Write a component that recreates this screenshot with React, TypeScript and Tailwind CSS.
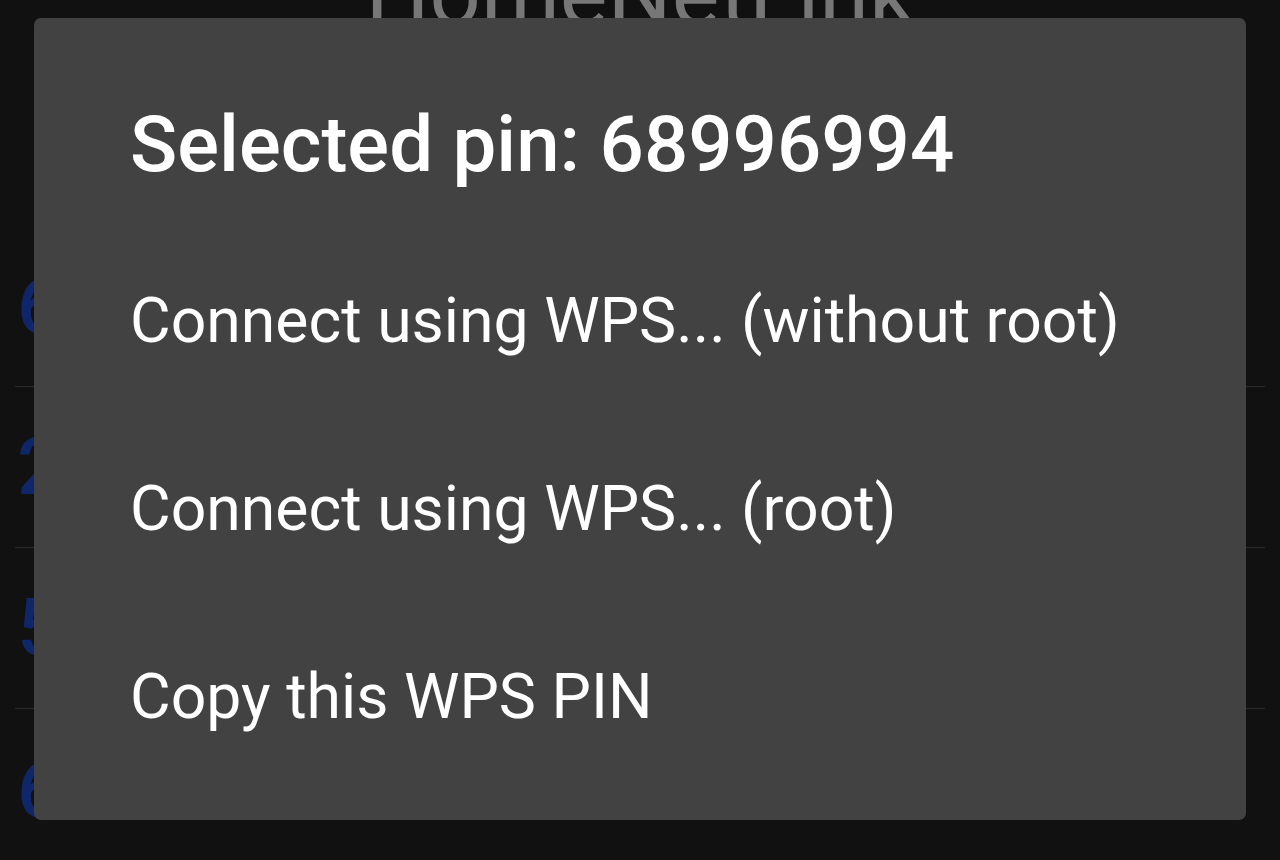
import React from "react";

const pins = ["68996994", "20172527", "55445580", "60312064"];

const actions = [
  "Connect using WPS... (without root)",
  "Connect using WPS... (root)",
  "Copy this WPS PIN",
];

export default function App() {
  return (
    <div
      className="relative w-[1280px] h-[860px] overflow-hidden bg-[#111111]"
      style={{ fontFamily: "Roboto, 'Noto Sans', sans-serif" }}
    >
      {/* Screen behind the dialog */}
      <div className="flex flex-col">
        <div className="h-[226px] flex justify-center">
          <span className="mt-[-50px] text-[90px] leading-none text-[#777777]">
            HomeNetLink
          </span>
        </div>
        {pins.map((pin, i) => (
          <div
            key={pin}
            className={`h-[161px] mx-[15px] flex items-center ${i < 3 ? "border-b border-[#2a2a2a]" : ""}`}
          >
            <span className="pl-[2px] text-[80px] font-medium leading-none text-[#10266a]">
              {pin}
            </span>
          </div>
        ))}
      </div>

      {/* Dialog */}
      <div className="absolute left-[34px] top-[18px] w-[1212px] h-[802px] rounded-[7px] bg-[#424242] pl-[96px] pt-[82px] flex flex-col">
        <h2 className="text-[78px] leading-[90px] font-medium text-white">
          Selected pin: 68996994
        </h2>
        <div className="mt-[37px] flex flex-col">
          {actions.map((a) => (
            <div key={a} className="h-[188px] flex items-center">
              <span className="text-[62.5px] leading-none text-white">{a}</span>
            </div>
          ))}
        </div>
      </div>
    </div>
  );
}
